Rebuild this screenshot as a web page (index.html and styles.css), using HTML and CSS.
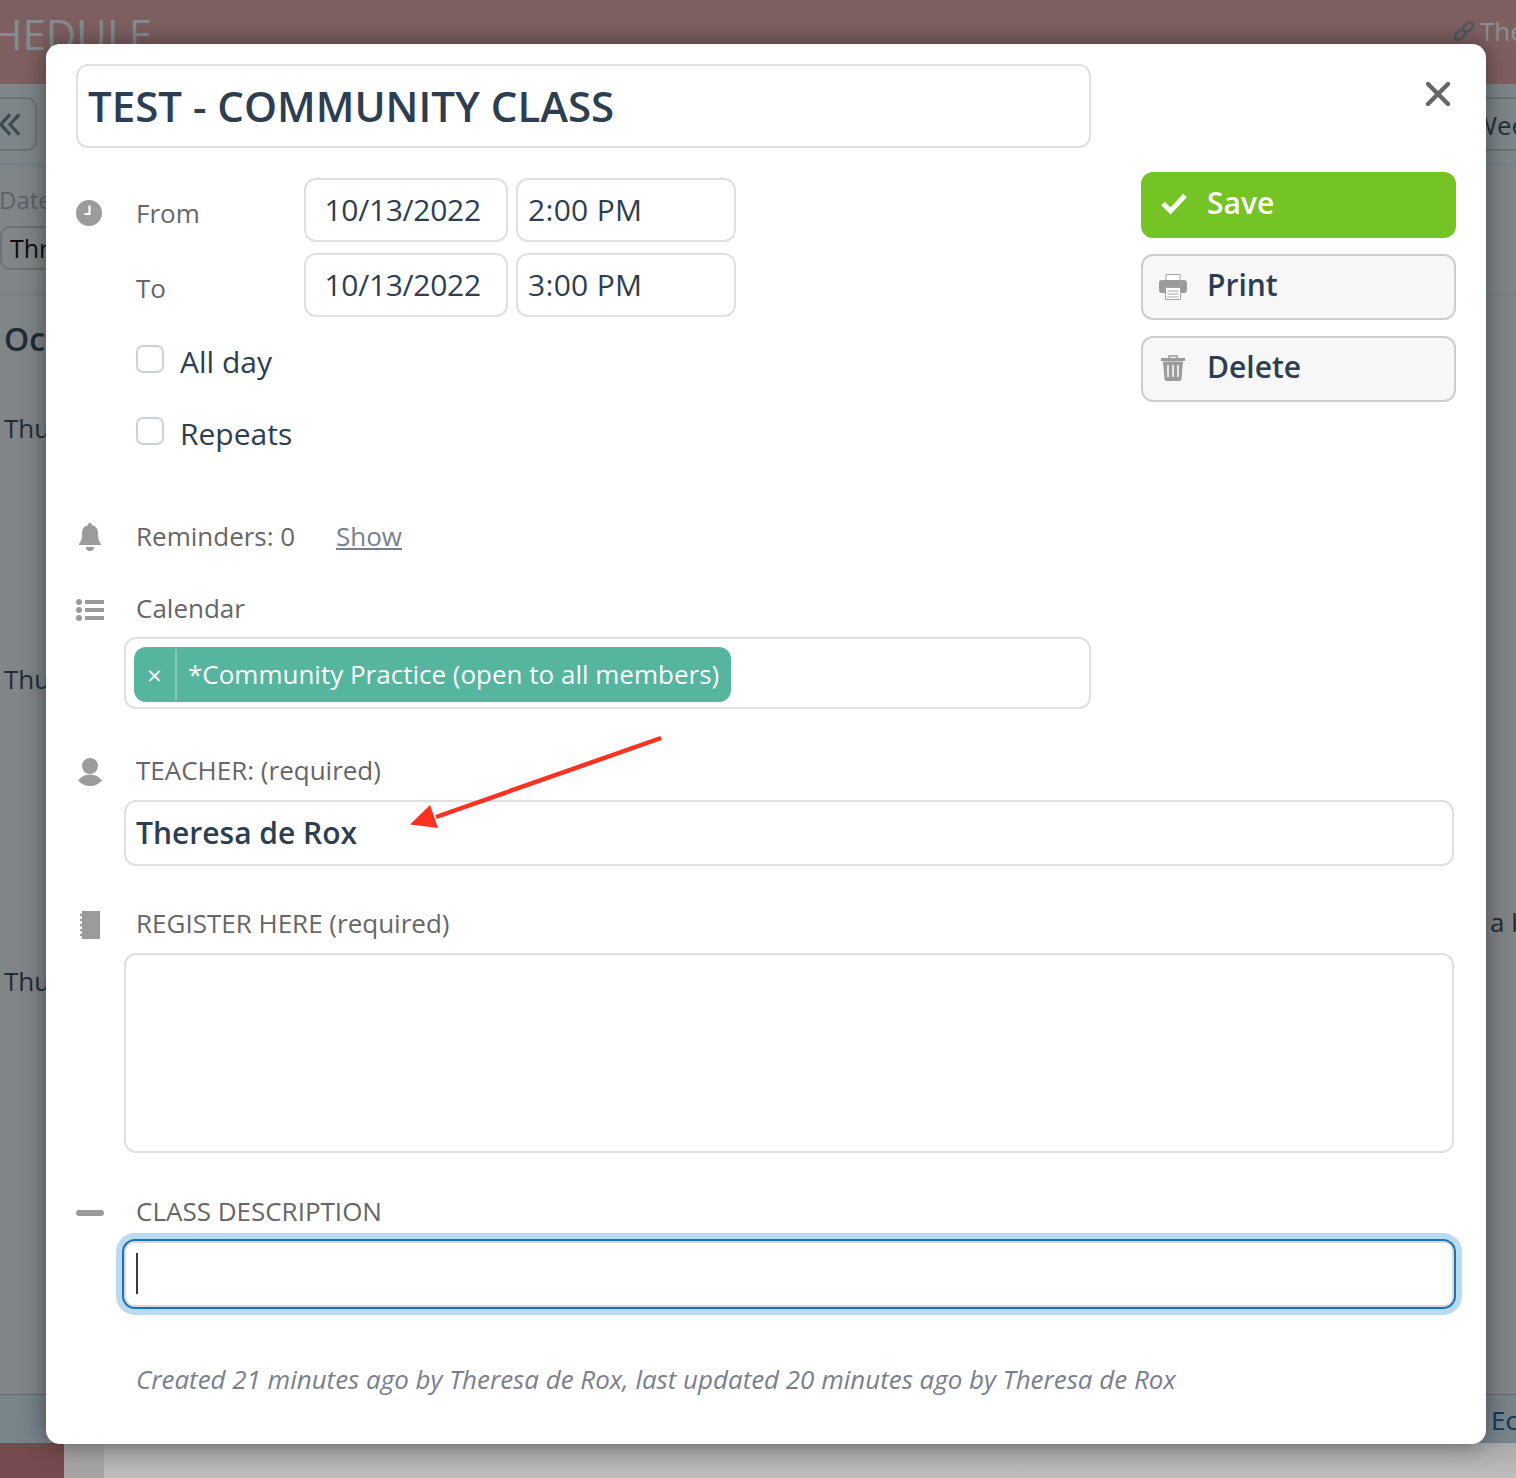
FILE: index.html
```html
<!DOCTYPE html>
<html lang="en">
<head>
<meta charset="utf-8">
<title>Schedule</title>
<link rel="stylesheet" href="styles.css">
</head>
<body>
<div class="page">
  <header class="bg-header">
    <div class="bg-title">SCHEDULE</div>
    <div class="bg-user">
      <svg class="bg-link" viewBox="0 0 22 22"><g fill="none" stroke="#4f5a60" stroke-width="2.600"><rect x="9.500" y="3.500" width="11" height="7" rx="3.500" transform="rotate(-45 15 7)"/><rect x="1.500" y="11.500" width="11" height="7" rx="3.500" transform="rotate(-45 7 15)"/></g></svg>
      <span>The</span>
    </div>
  </header>
  <div class="bg-toolbar">
    <div class="bg-nav"><svg class="bg-chevrons" viewBox="0 0 24 24"><path d="M12 1L2 12l10 11M22 1L12 12l10 11" fill="none" stroke="#3e4a52" stroke-width="3.600"/></svg></div>
    <div class="bg-week">Week</div>
  </div>
  <div class="bg-filter">
    <div class="bg-date">Date</div>
    <div class="bg-select">Three</div>
  </div>
  <div class="bg-list">
    <div class="bg-list-left">
      <div class="bg-month">Oct</div>
      <div class="bg-day day-one">Thu</div>
      <div class="bg-day day-two">Thu</div>
      <div class="bg-day day-three">Thu</div>
    </div>
    <div class="bg-list-right">a b</div>
  </div>
  <div class="bg-footer"><span>Ec</span></div>
  <div class="bg-bottom">
    <div class="bg-photo"></div>
    <div class="bg-side"></div>
    <div class="bg-rest"></div>
  </div>
</div>

<div class="modal">
  <div class="top">
    <div class="top-main">
      <div class="field title">TEST - COMMUNITY CLASS</div>
      <div class="when">
        <div class="when-row">
          <svg class="icon clock" viewBox="0 0 26 26"><circle cx="13" cy="13" r="13" fill="#9b9b9b"/><path d="M13.500 5.500v8.500H8.500" fill="none" stroke="#fff" stroke-width="2.200"/></svg>
          <div class="when-label">From</div>
          <div class="field date">10/13/2022</div>
          <div class="field time">2:00 PM</div>
        </div>
        <div class="when-row">
          <span class="icon-gap"></span>
          <div class="when-label">To</div>
          <div class="field date">10/13/2022</div>
          <div class="field time">3:00 PM</div>
        </div>
      </div>
      <div class="check-row first-check"><span class="checkbox"></span><span>All day</span></div>
      <div class="check-row"><span class="checkbox"></span><span>Repeats</span></div>
    </div>
    <aside class="top-side">
      <div class="close-row">
        <svg class="close" viewBox="0 0 24 24"><path d="M2 2l20 20M22 2L2 22" stroke="#666" stroke-width="4.400" stroke-linecap="round"/></svg>
      </div>
      <div class="btn btn-save">
        <svg class="btn-icon" viewBox="0 0 28 24"><path d="M3 11.500l7.500 7.500L25 3.500" fill="none" stroke="#fff" stroke-width="5"/></svg>
        <span>Save</span>
      </div>
      <div class="btn">
        <svg class="btn-icon" viewBox="0 0 28 26"><path d="M7 .5h14v6H7z" fill="#fff" stroke="#a3a3a3"/><path d="M3 6h22a3 3 0 0 1 3 3v7a3 3 0 0 1-3 3H3a3 3 0 0 1-3-3V9a3 3 0 0 1 3-3z" fill="#9b9b9b"/><path d="M6.500 13.500h15v12h-15z" fill="#fff" stroke="#a3a3a3"/><path d="M8.500 17h11M8.500 20h11M8.500 23h11" stroke="#a3a3a3"/></svg>
        <span>Print</span>
      </div>
      <div class="btn">
        <svg class="btn-icon trash" viewBox="0 0 24 26"><path d="M8 3V1h8v2" fill="none" stroke="#9b9b9b" stroke-width="1.500"/><path d="M0 3h24v3H0zM2 6.500h20l-1.500 17.500a2 2 0 0 1-2 2h-13a2 2 0 0 1-2-2z" fill="#9b9b9b"/><path d="M7 10v12M12 10v12M17 10v12" stroke="#fff" stroke-width="1.500"/></svg>
        <span>Delete</span>
      </div>
    </aside>
  </div>

  <div class="row reminders">
    <svg class="icon bell" viewBox="0 0 22 28"><path d="M11 0a2 2 0 0 1 2 2.300c4 .8 6 4 6 8 0 6 1 8 3 10.700v1H0v-1c2-2.700 3-4.700 3-10.700 0-4 2-7.200 6-8A2 2 0 0 1 11 0z" fill="#9b9b9b"/><path d="M7 24h8a4 4 0 0 1-8 0z" fill="#9b9b9b"/></svg>
    <span class="label reminder-label">Reminders: 0</span>
    <span class="show">Show</span>
  </div>

  <div class="row calendar">
    <svg class="icon list" viewBox="0 0 28 22"><g fill="#9b9b9b"><circle cx="3" cy="3" r="3"/><circle cx="3" cy="11" r="3"/><circle cx="3" cy="19" r="3"/><rect x="9" y="1" width="19" height="4"/><rect x="9" y="9" width="19" height="4"/><rect x="9" y="17" width="19" height="4"/></g></svg>
    <span class="label">Calendar</span>
  </div>
  <div class="field tags">
    <div class="tag">
      <span class="tag-x">×</span>
      <span class="tag-text">*Community Practice (open to all members)</span>
    </div>
  </div>

  <div class="row teacher">
    <svg class="icon person" viewBox="0 0 24 28"><circle cx="12" cy="8" r="8" fill="#9b9b9b"/><path d="M0 22.500C3 18.500 7 16.500 12 16.500s9 2 12 6C21 26 17 28 12 28S3 26 0 22.500z" fill="#9b9b9b"/></svg>
    <span class="label">TEACHER: (required)</span>
  </div>
  <div class="field wide teacher-field">Theresa de Rox</div>

  <div class="row register">
    <svg class="icon notebook" viewBox="0 0 20 28"><path d="M2 0h18v28H2v-3H0v-2h2v-3H0v-2h2v-3H0v-2h2V10H0V8h2V5H0V3h2z" fill="#9b9b9b"/></svg>
    <span class="label">REGISTER HERE (required)</span>
  </div>
  <div class="field wide register-field"></div>

  <div class="row description">
    <svg class="icon minus" viewBox="0 0 28 6"><rect width="28" height="6" rx="3" fill="#9b9b9b"/></svg>
    <span class="label">CLASS DESCRIPTION</span>
  </div>
  <div class="focus-field"><span class="caret"></span></div>

  <p class="meta">Created 21 minutes ago by Theresa de Rox, last updated 20 minutes ago by Theresa de Rox</p>

  <svg class="arrow" viewBox="0 0 260 100"><path d="M255 4L30 83" stroke="#ff3120" stroke-width="4.500" fill="none"/><path d="M4 90.500L24 71l8 23z" fill="#ff3120"/></svg>
</div>
</body>
</html>
```
FILE: styles.css
```css
* { box-sizing: border-box; }
html, body { margin: 0; padding: 0; }
body {
  width: 1516px;
  height: 1478px;
  overflow: hidden;
  position: relative;
  font-family: "Open Sans", "Noto Sans", sans-serif;
  color: #2c3e50;
  background: #808588;
}

/* dimmed page behind the dialog */
.page {
  width: 1516px;
  height: 1478px;
  display: flex;
  flex-direction: column;
  overflow: hidden;
  background: #808588;
}
.bg-header {
  height: 84px;
  flex: none;
  background: #7f6061;
  display: flex;
  justify-content: space-between;
  align-items: flex-start;
}
.bg-title {
  margin: 6px 0 0 -58px;
  font-size: 42px;
  line-height: 56px;
  color: #828e90;
  white-space: nowrap;
}
.bg-user {
  display: flex;
  align-items: center;
  gap: 5px;
  width: 63px;
  margin-top: 13px;
  flex: none;
  font-size: 26px;
  line-height: 36px;
  color: #8b9294;
  overflow: hidden;
  white-space: nowrap;
}
.bg-link { width: 22px; height: 22px; flex: none; }
.bg-toolbar {
  height: 81px;
  flex: none;
  padding-top: 13px;
  display: flex;
  justify-content: space-between;
  align-items: flex-start;
  border-bottom: 1px solid #6f7b8e;
  background: #7e8689;
}
.bg-nav {
  width: 50px;
  height: 54px;
  margin-left: -13px;
  border: 2px solid #6c7275;
  border-radius: 10px;
  display: flex;
  align-items: center;
  justify-content: flex-end;
  padding-right: 14px;
}
.bg-chevrons { width: 22px; height: 23px; display: block; flex: none; }
.bg-week {
  width: 60px;
  height: 54px;
  border-top: 2px solid #6c7275;
  border-bottom: 2px solid #6c7275;
  font-size: 26px;
  line-height: 52px;
  color: #24303a;
  white-space: nowrap;
  overflow: hidden;
  text-indent: -11px;
  margin-right: -28px;
  flex: none;
}
.bg-filter {
  height: 130px;
  flex: none;
  border-bottom: 1px solid #6f7b8e;
  padding-top: 19px;
  background: #808588;
}
.bg-date { margin-left: -1px; font-size: 24px; line-height: 32px; color: #5c6265; }
.bg-select {
  width: 60px;
  height: 44px;
  margin-top: 10px;
  border: 2px solid #6c7275;
  border-radius: 10px;
  padding-left: 8px;
  font-size: 25px;
  line-height: 40px;
  color: #0c0c0c;
  white-space: nowrap;
  overflow: hidden;
}
.bg-list {
  height: 1100px;
  flex: none;
  display: flex;
  justify-content: space-between;
  border-bottom: 1px solid #5d6a80;
  background: #808588;
}
.bg-list-left { width: 46px; white-space: nowrap; }
.bg-month {
  margin: 23px 0 0 4px;
  font-size: 32px;
  line-height: 42px;
  font-weight: 600;
  color: #1d2c38;
}
.bg-day { margin-left: 4px; font-size: 26px; line-height: 36px; color: #1f2d38; }
.day-one { margin-top: 50px; }
.day-two { margin-top: 215px; }
.day-three { margin-top: 266px; }
.bg-list-right {
  width: 26px;
  margin-top: 609px;
  font-size: 26px;
  line-height: 36px;
  color: #1f2d38;
  white-space: nowrap;
  overflow: hidden;
}
.bg-footer {
  height: 48px;
  flex: none;
  display: flex;
  justify-content: flex-end;
  background: #79838a;
  font-size: 26px;
  line-height: 50px;
  color: #0e3a5c;
}
.bg-footer span { width: 25px; overflow: hidden; white-space: nowrap; }
.bg-bottom { flex: 1; display: flex; }
.bg-photo { width: 64px; background: #764a4e; }
.bg-side { width: 40px; background: #a4a2a2; }
.bg-rest { flex: 1; background: linear-gradient(#a9a9a9, #bdbdbd); }

/* dialog */
.modal {
  position: absolute;
  left: 46px;
  top: 44px;
  width: 1440px;
  height: 1400px;
  padding: 20px 30px 0;
  background: #fff;
  border-radius: 14px;
  box-shadow: 0 0 26px rgba(0, 0, 0, .45);
}
.field {
  border: 2px solid #e0e0e0;
  border-radius: 12px;
  background: #fff;
}
.top { display: flex; justify-content: space-between; height: 438px; }
.top-main { width: 1015px; }
.top-side { width: 315px; }
.title {
  height: 84px;
  padding-left: 10px;
  font-size: 42px;
  line-height: 80px;
  font-weight: 600;
  white-space: nowrap;
}
.when { margin-top: 30px; display: flex; flex-direction: column; gap: 11px; }
.when-row { display: flex; align-items: flex-start; }
.icon { display: block; flex: none; }
.clock { width: 26px; height: 26px; margin-top: 22px; margin-right: 34px; }
.icon-gap { width: 60px; flex: none; }
.when-label {
  width: 168px;
  flex: none;
  padding-top: 17px;
  font-size: 26px;
  line-height: 36px;
  color: #666;
}
.date, .time {
  height: 64px;
  font-size: 30px;
  font-weight: 500;
  line-height: 60px;
  white-space: nowrap;
}
.date { width: 204px; padding-left: 18.500px; margin-right: 8px; letter-spacing: -.3px; }
.time { width: 220px; padding-left: 10px; letter-spacing: .3px; }
.check-row {
  height: 44px;
  margin-left: 60px;
  margin-top: 28px;
  display: flex;
  align-items: center;
  gap: 16px;
  font-size: 30px;
  line-height: 42px;
}
.first-check { margin-top: 23px; }
.checkbox {
  width: 28px;
  height: 28px;
  flex: none;
  margin-top: -6px;
  border: 2px solid #ccd1d6;
  border-radius: 7px;
  background: #fff;
}
.close-row { height: 108px; display: flex; justify-content: flex-end; padding: 18px 6px 0 0; }
.close { width: 24px; height: 24px; display: block; }
.btn {
  height: 66px;
  margin-bottom: 16px;
  display: flex;
  align-items: center;
  padding-bottom: 4px;
  border: 2px solid #cdcdd0;
  border-radius: 12px;
  background: #f7f7f7;
  font-size: 30px;
  font-weight: 600;
  line-height: 40px;
}
.btn-icon { width: 28px; height: 26px; margin-left: 16px; margin-right: 20px; margin-top: 4px; flex: none; }
.trash { width: 24px; margin-left: 18px; margin-right: 22px; margin-top: 2px; }
.btn-save {
  border-color: #74c425;
  background: #74c425;
  color: #fff;
}
.btn-save .btn-icon { margin-left: 17px; margin-right: 19px; margin-top: 2px; }

.row {
  height: 30px;
  display: grid;
  grid-template-columns: 60px auto 1fr;
  align-items: center;
  font-size: 26px;
  line-height: 28px;
  color: #666;
  white-space: nowrap;
}
.row .label { padding-bottom: 2px; }
.reminders { margin-top: 20px; }
.row .reminder-label { width: 200px; }
.show { color: #78808c; text-decoration: underline; padding-bottom: 2px; }
.bell { width: 22px; height: 28px; margin-left: 3px; }
.calendar { margin-top: 42px; }
.list { width: 28px; height: 22px; margin-top: 2px; }
.tags {
  width: 967px;
  height: 72px;
  margin: 13px 0 0 48px;
  padding: 8px;
}
.tag {
  display: inline-flex;
  align-items: stretch;
  height: 55px;
  border-radius: 12px;
  background: #55b59f;
  color: #fff;
  font-size: 26px;
  white-space: nowrap;
}
.tag-x {
  width: 43px;
  margin: 2px 0;
  text-align: center;
  border-right: 2px solid #86cbbb;
  line-height: 52px;
  font-size: 26px;
}
.tag-text { padding: 0 12px 0 11px; line-height: 55px; }
.teacher { margin-top: 47px; }
.person { width: 24px; height: 28px; margin-left: 2px; margin-top: 2px; }
.wide { width: 1330px; margin-left: 48px; }
.teacher-field {
  height: 66px;
  margin-top: 14px;
  padding-left: 10px;
  font-size: 30px;
  font-weight: 600;
  line-height: 62px;
}
.register { margin-top: 43px; }
.notebook { width: 20px; height: 28px; margin-left: 4px; margin-top: 2px; }
.register-field { height: 200px; margin-top: 14px; }
.description { margin-top: 44px; }
.minus { width: 28px; height: 6px; margin-top: 2px; }
.focus-field {
  width: 1334px;
  height: 70px;
  margin: 12px 0 0 46px;
  padding: 12px 0 0 12px;
  border: 2px solid #1c70b3;
  border-radius: 13px;
  background: #fff;
  box-shadow: 0 0 0 6px #b9dbf2, inset 0 2px 0 #d8d8d8, inset 0 -2px 0 #d8d8d8, inset 2px 0 0 #d8d8d8, inset -2px 0 0 #d8d8d8;
}
.caret { display: block; width: 2px; height: 41px; background: #2c3e50; }
.meta {
  margin: 53px 0 0 60px;
  font-size: 25.950px;
  line-height: 34px;
  font-style: italic;
  color: #78808c;
  white-space: nowrap;
}
.arrow {
  position: absolute;
  left: 360px;
  top: 690px;
  width: 260px;
  height: 100px;
}
```
